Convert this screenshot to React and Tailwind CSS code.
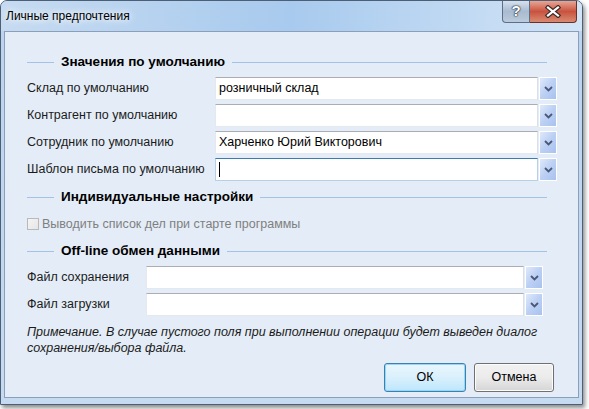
import React from "react";

const font = "font-['Liberation_Sans',Arial,sans-serif]";

const Chevron = () => (
  <svg width="9" height="6" viewBox="0 0 9 6">
    <path d="M1 1l3.5 3.5L8 1" fill="none" stroke="#4a5878" strokeWidth="1.8" />
  </svg>
);

const DropButton = () => (
  <div className="w-[18px] h-[23px] ml-[1px] border border-white bg-gradient-to-br from-[#dfe9fa] via-[#bcd0f4] to-[#a8c2ef] flex items-center justify-center shrink-0">
    <Chevron />
  </div>
);

const SectionHeader = ({ title }) => (
  <div className="flex items-center h-[16px] mr-[10px]">
    <div className="w-[27px] h-px bg-[#a4c1e6]" />
    <div className="px-[7px] font-bold text-[13.5px] text-black whitespace-nowrap">{title}</div>
    <div className="flex-1 h-px bg-[#a4c1e6]" />
  </div>
);

const Field = ({ label, value, focused, labelW }) => (
  <div className="flex items-center h-[23px]">
    <div className={`${labelW} shrink-0 text-[12.5px] text-[#1b1b1b] whitespace-nowrap`}>{label}</div>
    <div
      className={`flex-1 h-[23px] bg-white flex items-center px-[3px] text-[12.5px] text-black border ${
        focused
          ? "border-[#b7d0e9] border-t-[#3d7bad]"
          : "border-[#e3e9ef] border-t-[#abadb3] border-r-[#dbdfe6]"
      }`}
    >
      {value}
      {focused && <span className="w-px h-[15px] bg-black" />}
    </div>
    <DropButton />
  </div>
);

export default function App() {
  return (
    <div className={`w-[589px] h-[409px] bg-white ${font}`}>
      <div className="w-[583px] h-[405px] rounded-t-[7px] border border-[#4d5f75] bg-gradient-to-b from-[#bad3ee] to-[#c6dbf2] flex flex-col shadow-[2px_3px_4px_rgba(0,0,0,0.45)]">
        {/* title bar */}
        <div className="h-[30px] flex items-start rounded-t-[6px] bg-gradient-to-r from-[#c6dbf1] via-[#a8caee] to-[#d2e4f6]">
          <div className="pl-[5px] pt-[6px] text-[12px] text-black [text-shadow:0_0_6px_#ffffff,0_0_10px_#ffffff]">
            Личные предпочтения
          </div>
          <div className="flex-1" />
          <div className="flex mr-[5px]">
            <div className="w-[28px] h-[22px] rounded-bl-[4px] border border-t-0 border-[#5d6f85] bg-gradient-to-b from-[#d5e1ee] via-[#a9bbd0] to-[#bccbdc] flex items-center justify-center text-white font-bold text-[15px] [text-shadow:0_0_1px_#1f2c3c,0_0_1px_#1f2c3c,0_0_2px_#1f2c3c]">
              ?
            </div>
            <div className="w-[47px] h-[22px] rounded-br-[4px] border border-t-0 border-l-0 border-[#6b2f24] bg-gradient-to-b from-[#e7a596] via-[#c8523e] to-[#d98a72] flex items-center justify-center">
              <svg width="18" height="13" viewBox="0 0 18 13">
                <path d="M4 2.5l10 8M14 2.5L4 10.5" stroke="#3b2a28" strokeWidth="4.5" strokeLinecap="square" />
                <path d="M4 2.5l10 8M14 2.5L4 10.5" stroke="#ffffff" strokeWidth="2.2" strokeLinecap="square" />
              </svg>
            </div>
          </div>
        </div>

        {/* client */}
        <div className="flex-1 flex px-[3px] pb-[6px]">
          <div className="flex-1 border border-[#8b9fb8] bg-[#e4edf7] pl-[22px] pr-[21px] pt-[22px] flex flex-col">
            <SectionHeader title="Значения по умолчанию" />
            <div className="mt-[7px] flex flex-col gap-[4px]">
              <Field labelW="w-[188px]" label="Склад по умолчанию" value="розничный склад" />
              <Field labelW="w-[188px]" label="Контрагент по умолчанию" value="" />
              <Field labelW="w-[188px]" label="Сотрудник по умолчанию" value="Харченко Юрий Викторович" />
              <Field labelW="w-[188px]" label="Шаблон письма по умолчанию" value="" focused />
            </div>

            <div className="mt-[8px]">
              <SectionHeader title="Индивидуальные настройки" />
            </div>
            <div className="mt-[11px] flex items-center h-[16px] gap-[3px]">
              <div className="w-[12px] h-[12px] border border-[#b9b9b9] bg-gradient-to-br from-[#f4f4f4] to-[#e6e6e6]" />
              <span className="text-[12.5px] text-[#7f7f7f]">Выводить список дел при старте программы</span>
            </div>

            <div className="mt-[11px]">
              <SectionHeader title="Off-line обмен данными" />
            </div>
            <div className="mt-[7px] mr-[14px] flex flex-col gap-[4px]">
              <Field labelW="w-[119px]" label="Файл сохранения" value="" />
              <Field labelW="w-[119px]" label="Файл загрузки" value="" />
            </div>

            <div className="mt-[8px] text-[12.5px] italic leading-[16px] text-[#1b1b1b] whitespace-nowrap">
              Примечание. В случае пустого поля при выполнении операции будет выведен диалог
              <br />
              сохранения/выбора файла.
            </div>

            <div className="mt-[7px] flex justify-end gap-[8px] mr-[3px]">
              <div className="w-[82px] h-[29px] rounded-[3px] border border-[#3c7fb1] bg-gradient-to-b from-[#eaf6fd] via-[#d9f0fc] to-[#bee6fd] shadow-[inset_0_0_0_1px_#94d7f7] flex items-center justify-center text-[12.5px] text-black">
                ОК
              </div>
              <div className="w-[80px] h-[29px] rounded-[3px] border border-[#707070] bg-gradient-to-b from-[#f2f2f2] via-[#ebebeb] to-[#d5d5d5] shadow-[inset_0_0_0_1px_#fcfcfc] flex items-center justify-center text-[12.5px] text-black">
                Отмена
              </div>
            </div>
          </div>
        </div>
      </div>
    </div>
  );
}
